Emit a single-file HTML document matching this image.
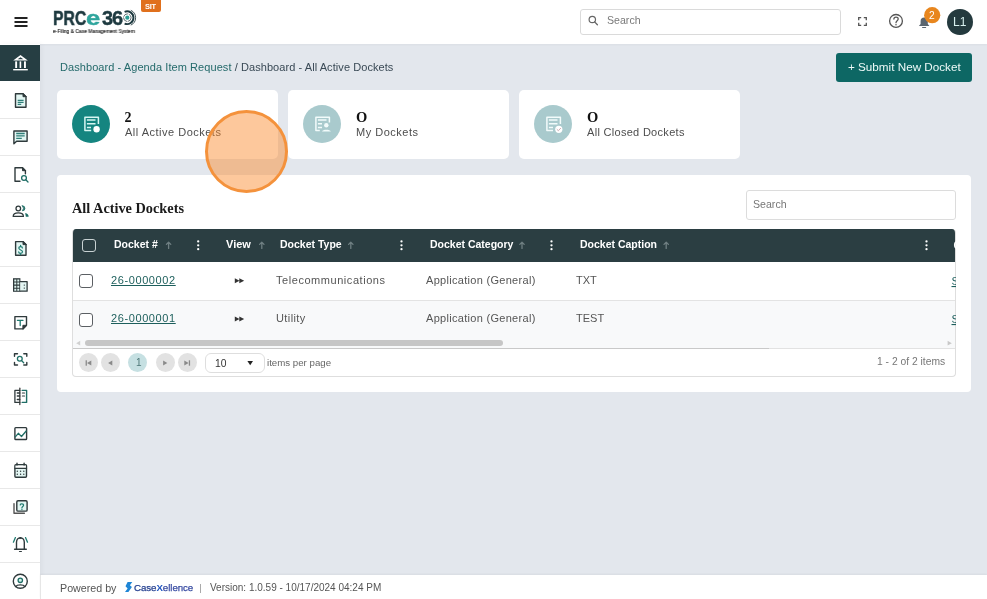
<!DOCTYPE html>
<html><head><meta charset="utf-8">
<style>
*{box-sizing:border-box;margin:0;padding:0}
html,body{width:987px;height:599px;overflow:hidden}
body>*{will-change:transform}
body{font-family:"Liberation Sans",sans-serif;background:#e3e7ed;position:relative;color:#4a4a4a}
.abs{position:absolute}
#hdr{left:0;top:0;width:987px;height:44px;background:#fff;box-shadow:0 1px 2px rgba(0,0,0,.04)}
#side{left:0;top:44px;width:40px;height:555px;background:#fff;box-shadow:2px 0 5px rgba(0,0,0,.04)}
.dv{position:absolute;left:0;width:40px;height:1px;background:#e8e8e8}
#foot{left:40px;top:575px;width:947px;height:24px;background:#fff;box-shadow:0 -1px 2px rgba(0,0,0,.05);border-left:1px solid #e6e6e6}
.t{position:absolute;white-space:nowrap;line-height:1}
.card{position:absolute;top:90px;height:69px;width:221px;background:#fff;border-radius:5px}
.circ{position:absolute;left:15px;top:15px;width:38px;height:38px;border-radius:50%}
.num{position:absolute;left:67.5px;top:20.5px;font-family:"Liberation Serif",serif;font-weight:bold;font-size:14px;color:#111;line-height:1}
.lbl{position:absolute;left:68px;top:37px;font-size:11px;color:#4d4d4d;line-height:1;white-space:nowrap}
#panel{left:57px;top:175px;width:914px;height:217px;background:#fff;border-radius:4px}
.th{position:absolute;top:239px;color:#fff;font-weight:bold;font-size:10.5px;line-height:1;white-space:nowrap}
.td{position:absolute;font-size:11px;color:#555;line-height:1;white-space:nowrap}
.lnk{position:absolute;font-size:11px;color:#1d5f5c;line-height:1;white-space:nowrap;text-decoration:underline;letter-spacing:.6px}
.pb{position:absolute;top:353px;width:19px;height:19px;border-radius:50%;background:#e2e2e2}
#ov{position:absolute;left:0;top:0;width:987px;height:599px}
</style></head><body>

<!-- header -->
<div id="hdr" class="abs"></div>
<div class="t" style="left:52.5px;top:7.5px;font-size:20px;font-weight:bold;color:#1e3a40;transform:scaleX(.79);transform-origin:0 0;-webkit-text-stroke:.5px #1e3a40">PRC</div>
<div class="t" style="left:85.5px;top:7.5px;font-size:20px;font-weight:bold;color:#2fa59d;transform:scaleX(1.28);transform-origin:0 0;-webkit-text-stroke:.4px #2fa59d">e</div>
<div class="t" style="left:101.5px;top:7.5px;font-size:20px;font-weight:bold;color:#1e3a40;letter-spacing:-1.2px;-webkit-text-stroke:.4px #1e3a40">36</div>
<div class="t" style="left:53px;top:28.5px;font-size:5px;color:#2a2a2a;transform:scaleX(.99);transform-origin:0 0;-webkit-text-stroke:.15px #2a2a2a">e-Filing &amp; Case Management System</div>
<div class="abs" style="left:141px;top:0;width:20px;height:12px;background:#e0701d;border-radius:0 0 2px 2px"></div>
<div class="t" style="left:144.5px;top:2.5px;font-size:7.5px;color:#fff;font-weight:bold;letter-spacing:-.3px">SIT</div>
<div class="abs" style="left:580px;top:9px;width:261px;height:26px;border:1px solid #dadada;border-radius:3px;background:#fff"></div>
<div class="t" style="left:607px;top:15px;font-size:10.6px;color:#7a7a7a">Search</div>
<div class="abs" style="left:947px;top:9px;width:25.5px;height:26px;border-radius:50%;background:#243a3e"></div>
<div class="t" style="left:952.5px;top:16px;font-size:12px;color:#d8f0ee">L1</div>

<!-- sidebar -->
<div id="side" class="abs">
  <div class="abs" style="left:0;top:1px;width:40px;height:36px;background:#263e43"></div>
</div>
<div class="dv" style="top:118px"></div><div class="dv" style="top:155px"></div><div class="dv" style="top:192px"></div>
<div class="dv" style="top:229px"></div><div class="dv" style="top:266px"></div><div class="dv" style="top:303px"></div>
<div class="dv" style="top:340px"></div><div class="dv" style="top:377px"></div><div class="dv" style="top:414px"></div>
<div class="dv" style="top:451px"></div><div class="dv" style="top:488px"></div><div class="dv" style="top:525px"></div>
<div class="dv" style="top:562px"></div>

<!-- breadcrumb -->
<div class="t" style="left:60px;top:62px;font-size:11px;color:#246a6b;letter-spacing:.07px">Dashboard - Agenda Item Request <span style="color:#394955">/ Dashboard - All Active Dockets</span></div>
<div class="abs" style="left:836px;top:53px;width:136px;height:29px;background:#0d6764;border-radius:3px"></div>
<div class="t" style="left:847.5px;top:60.5px;font-size:11.7px;color:#eefaf8">+ Submit New Docket</div>

<!-- cards -->
<div class="card" style="left:57px"><div class="circ" style="background:#158580"></div><div class="num">2</div><div class="lbl" style="letter-spacing:.5px">All Active Dockets</div></div>
<div class="card" style="left:288px"><div class="circ" style="background:#a9cacd"></div><div class="num" style="left:68px;font-size:14.5px;top:20px">O</div><div class="lbl" style="letter-spacing:.5px">My Dockets</div></div>
<div class="card" style="left:519px"><div class="circ" style="background:#a9cacd"></div><div class="num" style="left:68px;font-size:14.5px;top:20px">O</div><div class="lbl" style="letter-spacing:.3px">All Closed Dockets</div></div>

<!-- panel -->
<div id="panel" class="abs"></div>
<div class="t" style="left:72px;top:200.5px;font-family:'Liberation Serif',serif;font-weight:bold;font-size:14.3px;color:#1b1b1b;letter-spacing:0">All Active Dockets</div>
<div class="abs" style="left:746px;top:190px;width:210px;height:30px;border:1px solid #dcdcdc;border-radius:3px"></div>
<div class="t" style="left:753px;top:199px;font-size:10.6px;color:#777">Search</div>

<!-- grid -->
<div class="abs" style="left:72px;top:229px;width:884px;height:148px;border:1px solid #dedede;border-top:none;border-radius:4px;overflow:hidden;background:#fff">
  <div class="abs" style="left:-1px;top:0;width:884px;height:33px;background:#2b3e42"></div>
  <div class="abs" style="left:0;top:33px;width:884px;height:39px;background:#fff;border-bottom:1px solid #e3e3e3"></div>
  <div class="abs" style="left:0;top:72px;width:884px;height:48px;background:#f8f9fa"></div>
  <div class="abs" style="left:0;top:119px;width:696px;height:1px;background:#c9c9c9"></div>
  <div class="abs" style="left:696px;top:119px;width:200px;height:1px;background:#e2e2e2"></div>
  <div class="abs" style="left:12px;top:111px;width:418px;height:6px;border-radius:3px;background:#c6c6c6"></div>
</div>

<!-- header texts -->
<div class="abs" style="left:82px;top:239px;width:14px;height:13px;border:1.2px solid #c9d2d3;border-radius:3px"></div>
<div class="th" style="left:114px">Docket #</div>
<div class="th" style="left:226px;font-size:11px">View</div>
<div class="th" style="left:279.5px">Docket Type</div>
<div class="th" style="left:429.5px">Docket Category</div>
<div class="th" style="left:579.5px">Docket Caption</div>

<!-- rows -->
<div class="abs" style="left:79px;top:274px;width:14px;height:14px;border:1.3px solid #5b5f63;border-radius:3px;background:#fff"></div>
<div class="abs" style="left:79px;top:312.5px;width:14px;height:14px;border:1.3px solid #5b5f63;border-radius:3px;background:#fff"></div>
<div class="lnk" style="left:110.5px;top:275px">26-0000002</div>
<div class="lnk" style="left:110.5px;top:313px">26-0000001</div>
<div class="td" style="left:276px;top:275px;letter-spacing:.55px">Telecommunications</div>
<div class="td" style="left:426px;top:275px;letter-spacing:.3px">Application (General)</div>
<div class="td" style="left:575.5px;top:275px">TXT</div>
<div class="td" style="left:276px;top:313px;letter-spacing:.4px">Utility</div>
<div class="td" style="left:426px;top:313px;letter-spacing:.3px">Application (General)</div>
<div class="td" style="left:575.5px;top:313px">TEST</div>

<!-- pager -->
<div class="pb" style="left:79px"></div>
<div class="pb" style="left:101px"></div>
<div class="pb" style="left:128px;background:#c6e0e2"></div>
<div class="pb" style="left:156px"></div>
<div class="pb" style="left:177.5px"></div>
<div class="t" style="left:135.5px;top:357.5px;font-size:10px;color:#4e7778">1</div>
<div class="abs" style="left:205px;top:353px;width:60px;height:20px;border:1px solid #dedede;border-radius:6px"></div>
<div class="t" style="left:215px;top:359px;font-size:10.3px;color:#333">10</div>
<div class="t" style="left:266.5px;top:357.5px;font-size:9.7px;color:#666">items per page</div>
<div class="t" style="left:877px;top:356.5px;font-size:10.3px;color:#777">1 - 2 of 2 items</div>

<!-- footer -->
<div id="foot" class="abs"></div>
<div class="t" style="left:60px;top:582.5px;font-size:10.7px;color:#555">Powered by</div>
<div class="t" style="left:133.5px;top:583px;font-size:9.7px;color:#233f8f;letter-spacing:-.05px;-webkit-text-stroke:.25px #233f8f">Case<span style="color:#1f55c0;font-weight:bold;-webkit-text-stroke:0">X</span><span style="color:#4b55b5">ellence</span></div>
<div class="abs" style="left:200.3px;top:584px;width:1.3px;height:9px;background:#aaa"></div>
<div class="t" style="left:210px;top:583px;font-size:10px;color:#555">Version: 1.0.59 - 10/17/2024 04:24 PM</div>

<!-- icons overlay -->
<svg id="ov" viewBox="0 0 987 599" fill="none" stroke-linecap="round" stroke-linejoin="round">
  <!-- hamburger -->
  <path d="M14.5 18H27.5M14.5 22H27.5M14.5 26H27.5" stroke="#222" stroke-width="2" stroke-linecap="butt"/>
  <!-- logo target -->
  <circle cx="127.3" cy="17.7" r="2.1" fill="#2a9d94"/>
  <circle cx="127.3" cy="17.7" r="3.8" stroke="#3a4d51" stroke-width=".8" stroke-dasharray="5 1.5"/>
  <path d="M124.6 11.8A6.4 6.4 0 1 1 124.6 23.6" stroke="#1e3a40" stroke-width="1.9" stroke-linecap="butt"/>
  <path d="M130.8 10.3A8.1 8.1 0 0 1 130.8 25.1" stroke="#2c4246" stroke-width=".9" stroke-linecap="butt"/>
  <!-- header search icon -->
  <circle cx="592.3" cy="19.5" r="3.2" stroke="#666" stroke-width="1.2"/>
  <path d="M594.6 21.9L597.4 24.8" stroke="#666" stroke-width="1.3"/>
  <!-- expand -->
  <path d="M858.7 20.2V17.7H861.2M863.8 17.7H866.3V20.2M858.7 22.8V25.3H861.2M863.8 25.3H866.3V22.8" stroke="#555" stroke-width="1.3" stroke-linecap="butt" stroke-linejoin="miter"/>
  <!-- help -->
  <circle cx="896" cy="20.9" r="6.4" stroke="#555" stroke-width="1.3"/>
  <path d="M893.9 19.1C893.9 16.5 898.2 16.5 898.2 19C898.2 20.7 896 20.8 896 22.7" stroke="#555" stroke-width="1.3"/>
  <circle cx="896" cy="24.7" r=".75" fill="#555"/>
  <!-- bell -->
  <path d="M918.9 26L920.6 24V21.2A3.6 3.6 0 0 1 927.8 21.2V24L929.4 26Z" fill="#5b6670"/>
  <path d="M922.6 27.5H925.6" stroke="#5b6670" stroke-width="1.2"/>
  <!-- badge -->
  <circle cx="932.2" cy="15.2" r="8.1" fill="#e8861e"/>
  <text x="929.1" y="18.6" font-family="Liberation Sans" font-size="10.2" fill="#fff">2</text>

  <!-- sidebar icons -->
  <!-- bank -->
  <path d="M13.2 60.6L20.5 55L27.8 60.6Z" fill="#fff"/>
  <path d="M17.6 59.2L20.5 57.3L23.4 59.2Z" fill="#263e43"/>
  <rect x="15.2" y="61.4" width="1.9" height="6.6" fill="#fff"/>
  <rect x="19.6" y="61.4" width="1.6" height="6.6" fill="#fff"/>
  <rect x="24" y="61.4" width="1.9" height="6.6" fill="#fff"/>
  <rect x="13.2" y="69" width="14.6" height="1.4" fill="#fff"/>
  <!-- doc -->
  <path d="M15.5 93.7H23L26 96.7V107.3H15.5Z" stroke="#2f3a3c" stroke-width="1.4" fill="#e3f6f3"/>
  <path d="M23 93.7V96.7H26Z" fill="#2f3a3c" stroke="#2f3a3c" stroke-width="1"/>
  <path d="M17.7 100.4H23.6M17.7 102.4H23.6M17.7 104.4H21.2" stroke="#2f7f79" stroke-width="1.2" stroke-linecap="butt"/>
  <!-- chat -->
  <path d="M13.9 131H27.1V141.3H16.6L13.9 143.8Z" stroke="#2f3a3c" stroke-width="1.4" fill="#e3f6f3"/>
  <path d="M16.2 133.5H24.7M16.2 135.9H24.7M16.2 138.3H21.8" stroke="#2f7f79" stroke-width="1.3" stroke-linecap="butt"/>
  <!-- doc search -->
  <path d="M20 181.3H15V167.7H22.5L25.4 170.7V173.8" stroke="#2f3a3c" stroke-width="1.4"/>
  <path d="M22.5 167.7V170.7H25.4Z" fill="#2f3a3c" stroke="#2f3a3c" stroke-width="1"/>
  <circle cx="24" cy="178" r="2.4" stroke="#1f6e66" stroke-width="1.3"/>
  <path d="M25.8 179.8L28 182" stroke="#1f6e66" stroke-width="1.3"/>
  <!-- users -->
  <circle cx="18.3" cy="208.5" r="2.3" stroke="#2f3a3c" stroke-width="1.3"/>
  <path d="M13.2 216.4C13.2 213.8 15.8 212.9 18.3 212.9C20.8 212.9 23.4 213.8 23.4 216.4Z" stroke="#2f3a3c" stroke-width="1.3"/>
  <path d="M22.4 205.8A2.5 2.5 0 0 1 22.4 210.8A3.6 3.6 0 0 0 22.4 205.8Z" fill="#1f6e66" stroke="#1f6e66" stroke-width=".8"/>
  <path d="M25.2 213.1C27.3 213.5 28.6 214.8 28.6 216.8H25.8Z" fill="#1f6e66"/>
  <!-- dollar doc -->
  <path d="M15.6 241.6H23L26 244.6V255.2H15.6Z" stroke="#2f3a3c" stroke-width="1.4" fill="#e3f6f3"/>
  <path d="M23 241.6V244.6H26Z" fill="#2f3a3c" stroke="#2f3a3c" stroke-width="1"/>
  <path d="M22.4 247.9C22.4 247 21.6 246.6 20.6 246.6C19.5 246.6 18.8 247.2 18.8 248.1C18.8 250.3 22.5 249.6 22.5 251.8C22.5 252.8 21.7 253.3 20.6 253.3C19.5 253.3 18.7 252.8 18.7 251.9M20.6 245.3V246.6M20.6 253.3V254.6" stroke="#1f7a70" stroke-width="1.2"/>
  <!-- building -->
  <rect x="13" y="278.2" width="7.4" height="13.6" fill="#2f3a3c"/>
  <path d="M14.3 279.5h2v2h-2zM17.3 279.5h2v2h-2zM14.3 282.6h2v2h-2zM17.3 282.6h2v2h-2zM14.3 285.7h2v2h-2zM17.3 285.7h2v2h-2zM14.3 288.8h2v2h-2zM17.3 288.8h2v2h-2z" fill="#dff5f1"/>
  <path d="M20.4 281.6H27.1V291.2H20.4" stroke="#2f3a3c" stroke-width="1.3" fill="#e3f6f3"/>
  <circle cx="24.3" cy="285.1" r=".7" fill="#2f3a3c"/><circle cx="24.3" cy="288.1" r=".7" fill="#2f3a3c"/>
  <!-- T note -->
  <path d="M14.9 316.6H26.5V325.3L22.9 328.9H14.9Z" stroke="#2f3a3c" stroke-width="1.4" fill="#fff"/>
  <path d="M26.5 325.3H22.9V328.9Z" fill="#2f3a3c" stroke="#2f3a3c" stroke-width="1"/>
  <path d="M17.4 320.3H23M20.2 320.3V325.6" stroke="#1f7a70" stroke-width="1.3"/>
  <!-- scan -->
  <path d="M14.5 356.2V353.7H17.5M23.8 353.7H26.8V356.2M14.5 362.5V365H17.5M23.8 365H26.8V362.5" stroke="#2f3a3c" stroke-width="1.4"/>
  <circle cx="19.8" cy="358.8" r="2.4" stroke="#1f6e66" stroke-width="1.3"/>
  <path d="M21.6 360.6L23.7 362.7" stroke="#1f6e66" stroke-width="1.3"/>
  <!-- book -->
  <path d="M19.8 388.3V404.5" stroke="#555" stroke-width="1.5"/>
  <path d="M19.8 390.4H14.9V402.4H19.8M17.3 393H19.8M17.3 396H19.8M17.3 399.5H19.8" stroke="#2f3a3c" stroke-width="1.3"/>
  <path d="M22.2 390.4H26.6V402.4H22.2" stroke="#1f6e66" stroke-width="1.4"/>
  <path d="M22.4 393H24.5M22.4 396H24.5" stroke="#2f3a3c" stroke-width="1.2"/>
  <!-- chart -->
  <rect x="14.9" y="427.6" width="11.7" height="11.9" rx=".8" stroke="#2f3a3c" stroke-width="1.4" fill="#fff"/>
  <path d="M15.3 436.8L18.3 433.3L21.5 436.5L26.2 431" stroke="#1f6e66" stroke-width="1.3"/>
  <!-- calendar -->
  <rect x="14.9" y="464.8" width="11.6" height="12.5" rx="1" stroke="#2f3a3c" stroke-width="1.4" fill="#e3f6f3"/>
  <rect x="15.6" y="465.5" width="10.2" height="2.6" fill="#fff"/>
  <path d="M14.9 468.3H26.5" stroke="#2f3a3c" stroke-width="1.3"/>
  <path d="M17 463.1V465M24.1 463.1V465" stroke="#2f3a3c" stroke-width="1.4"/>
  <g fill="#2f3a3c"><circle cx="17.3" cy="471.3" r=".7"/><circle cx="20.6" cy="471.3" r=".7"/><circle cx="23.8" cy="471.3" r=".7"/><circle cx="17.3" cy="474.3" r=".7"/><circle cx="20.6" cy="474.3" r=".7"/><circle cx="23.8" cy="474.3" r=".7"/></g>
  <!-- help stack -->
  <rect x="16.8" y="500.8" width="10.3" height="10.3" rx="1.2" stroke="#2f3a3c" stroke-width="1.4" fill="#e3f6f3"/>
  <path d="M14 503.6V513.3H24.4" stroke="#555" stroke-width="1.4"/>
  <path d="M20.3 504.9C20.3 503.4 23.6 503.4 23.6 505.1C23.6 506.4 21.9 506.5 21.9 507.9" stroke="#1f7a70" stroke-width="1.2"/>
  <circle cx="21.9" cy="509.5" r=".65" fill="#1f7a70"/>
  <!-- alarm -->
  <path d="M16.5 549V542.3A3.9 4.6 0 0 1 24.3 542.3V549" stroke="#2f3a3c" stroke-width="1.4"/>
  <path d="M19.6 538.2L20.4 537L21.2 538.2Z" fill="#2f3a3c" stroke="#2f3a3c" stroke-width=".8"/>
  <path d="M14.6 549.3H26.3" stroke="#2f3a3c" stroke-width="1.4"/>
  <path d="M19.5 551.5H21.4" stroke="#2f3a3c" stroke-width="1.2"/>
  <path d="M15.4 537.6L13.4 542.2M25.5 537.6L27.5 542.2" stroke="#1f7a70" stroke-width="1.3"/>
  <!-- user circle -->
  <circle cx="20.3" cy="581.3" r="7" stroke="#2f3a3c" stroke-width="1.4"/>
  <circle cx="20.3" cy="580.3" r="2.2" stroke="#1f6e66" stroke-width="1.3" fill="#d3f1ec"/>
  <path d="M15.6 586.6C17.2 584.3 23.4 584.3 25 586.6" stroke="#2f3a3c" stroke-width="1.3"/>

  <!-- card icons -->
  <g stroke="#d6f6f1" stroke-width="1.5" stroke-linecap="butt">
    <path d="M98.4 124V117.2H84.9V130.5H91.2"/>
    <path d="M86.9 119.9H95.5M86.9 123.8H95.5M86.9 127.5H91"/>
  </g>
  <circle cx="96.6" cy="129.3" r="3.2" fill="#fff"/>
  <g stroke="#f2fbfb" stroke-width="1.5" stroke-linecap="butt">
    <path d="M329.4 122.5V117.2H315.9V130.5H319.8"/>
    <path d="M317.9 119.9H326.5M317.9 123.8H322M317.9 127.5H322"/>
  </g>
  <circle cx="326.3" cy="125.2" r="2.2" fill="#f2fbfb"/>
  <path d="M322 131.5C322.6 129 330.2 129 330.8 131.5Z" fill="#f2fbfb"/>
  <g stroke="#f2fbfb" stroke-width="1.5" stroke-linecap="butt">
    <path d="M560.4 124V117.2H546.9V130.5H553"/>
    <path d="M548.9 119.9H557.5M548.9 123.8H557.5M548.9 127.5H553"/>
  </g>
  <circle cx="558.8" cy="129.3" r="3.6" fill="#fff"/>
  <path d="M557.1 129.5L558.4 130.7L560.6 128.3" stroke="#c9a3ab" stroke-width=".9"/>

  <!-- table header icons -->
  <g stroke="#6f7f82" stroke-width="1.3">
    <path d="M168.6 248.4V242.2M166.4 244.4L168.6 242.2L170.8 244.4"/>
    <path d="M261.8 248.4V242.2M259.6 244.4L261.8 242.2L264 244.4"/>
    <path d="M350.8 248.4V242.2M348.6 244.4L350.8 242.2L353 244.4"/>
    <path d="M522 248.4V242.2M519.8 244.4L522 242.2L524.2 244.4"/>
    <path d="M666.2 248.4V242.2M664 244.4L666.2 242.2L668.4 244.4"/>
  </g>
  <g fill="#fff">
    <circle cx="198.2" cy="241.4" r="1.15"/><circle cx="198.2" cy="245.3" r="1.15"/><circle cx="198.2" cy="249.2" r="1.15"/>
    <circle cx="401.5" cy="241.4" r="1.15"/><circle cx="401.5" cy="245.3" r="1.15"/><circle cx="401.5" cy="249.2" r="1.15"/>
    <circle cx="551.5" cy="241.4" r="1.15"/><circle cx="551.5" cy="245.3" r="1.15"/><circle cx="551.5" cy="249.2" r="1.15"/>
    <circle cx="926.5" cy="241.4" r="1.15"/><circle cx="926.5" cy="245.3" r="1.15"/><circle cx="926.5" cy="249.2" r="1.15"/>
  </g>
  <!-- row arrows -->
  <g fill="#333">
    <path d="M234.8 278.2L239.5 280.7L234.8 283.2Z M239.3 278.2L244.2 280.7L239.3 283.2Z"/>
    <path d="M234.8 316.6L239.5 319.1L234.8 321.6Z M239.3 316.6L244.2 319.1L239.3 321.6Z"/>
  </g>
  <!-- scroll arrows -->
  <path d="M80.2 340.8L76.2 343.2L80.2 345.6Z" fill="#d0d0d0"/>
  <path d="M947.6 340.8L951.8 343.2L947.6 345.6Z" fill="#c8c8c8"/>
  <!-- pager icons -->
  <g fill="#8a8a8a">
    <rect x="85.6" y="360.3" width="1.3" height="5.4"/>
    <path d="M91.3 360.4L87 363L91.3 365.6Z"/>
    <path d="M112.3 360.6L108.1 363L112.3 365.4Z"/>
    <path d="M163.1 360.6L167.3 363L163.1 365.4Z"/>
    <path d="M184.3 360.4L188.6 363L184.3 365.6Z"/>
    <rect x="188.8" y="360.3" width="1.3" height="5.4"/>
    <path d="M247.4 361.1H253L250.2 365.2Z" fill="#222"/>
  </g>
  <!-- partial right column -->
  <text x="951.5" y="285" font-family="Liberation Sans" font-size="11" fill="#1d5f5c" text-decoration="underline">S</text>
  <text x="951.5" y="323" font-family="Liberation Sans" font-size="11" fill="#1d5f5c" text-decoration="underline">S</text>
  <text x="953.5" y="249" font-family="Liberation Sans" font-size="10.5" font-weight="bold" fill="#fff">C</text>
  <!-- footer logo S -->
  <path d="M127.6 582H132.3L129.9 585.2L131.9 587.1L128.4 592H125L127.6 588.4L125.5 586.3Z" fill="#1f86d6"/>
</svg>

<!-- clip partial column -->
<div class="abs" style="left:955.5px;top:262px;width:15px;height:90px;background:#fff"></div>

<!-- click indicator -->
<div class="abs" style="left:205px;top:110px;width:83px;height:83px;border-radius:50%;border:3px solid #f4923c;background:rgba(250,135,40,.46)"></div>
</body></html>
